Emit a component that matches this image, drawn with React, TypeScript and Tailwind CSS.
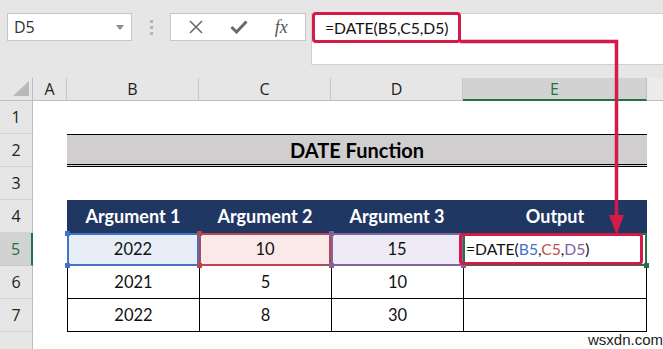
import React from "react";

const RED = "#d41a46";

function RowHead({ n, active }: { n: number | string; active?: boolean }) {
  return active ? (
    <div className="flex items-center justify-center bg-[#d2d2d2] border-r-2 border-r-[#217346] border-b border-b-[#c8c8c8] text-[#217346] text-[16px] font-['Open_Sans',sans-serif]">
      {n}
    </div>
  ) : (
    <div className="flex items-center justify-center bg-[#e6e6e6] border-r border-r-[#bdbdbd] border-b border-b-[#d4d4d4] text-[#222] text-[16px] font-['Open_Sans',sans-serif]">
      {n}
    </div>
  );
}

function ColHead({ l, active }: { l: string; active?: boolean }) {
  return active ? (
    <div className="flex items-center justify-center bg-[#d2d2d2] border-b-2 border-b-[#217346] border-r border-r-[#bdbdbd] text-[#217346] text-[16px] font-['Open_Sans',sans-serif]">
      {l}
    </div>
  ) : (
    <div className="flex items-center justify-center bg-[#e6e6e6] border-b border-b-[#bdbdbd] border-r border-r-[#c8c8c8] text-[#222] text-[16px] font-['Open_Sans',sans-serif]">
      {l}
    </div>
  );
}

function Cell({ children, cls }: { children?: React.ReactNode; cls: string }) {
  return <div className={"flex items-center justify-center text-[16.5px] text-[#111] " + cls}>{children}</div>;
}

export default function App() {
  return (
    <div className="relative w-[663px] h-[349px] overflow-hidden bg-white font-['Lato',sans-serif]">
      {/* toolbar */}
      <div className="h-[78px] bg-[#e6e6e6] flex items-start pt-[13px] pl-[7px]">
        <div className="w-[125px] h-[28px] bg-white border border-[#c6c6c6] flex items-center justify-between pl-[6px] pr-[7px]">
          <span className="text-[16px] text-[#333] font-['Open_Sans',sans-serif]">D5</span>
          <svg width="8" height="5" viewBox="0 0 8 5">
            <path d="M0 0 H8 L4 5 Z" fill="#8a8a8a" />
          </svg>
        </div>
        <div className="w-[38px] h-[28px] flex flex-col items-center justify-center gap-[3px]">
          <div className="w-[3px] h-[3px] bg-[#b3b3b3]" />
          <div className="w-[3px] h-[3px] bg-[#b3b3b3]" />
          <div className="w-[3px] h-[3px] bg-[#b3b3b3]" />
        </div>
        <div className="w-[136px] h-[28px] bg-white border border-[#c6c6c6] flex items-center justify-around px-[4px]">
          <svg width="16" height="16" viewBox="0 0 16 16">
            <path d="M2 2 L14 14 M14 2 L2 14" stroke="#6a6a6a" strokeWidth="1.6" />
          </svg>
          <svg width="18" height="14" viewBox="0 0 18 14">
            <path d="M1.5 7 L6.5 12 L16.5 1.5" stroke="#6a6a6a" strokeWidth="3" fill="none" />
          </svg>
          <span className="text-[18px] italic text-[#555] font-['Liberation_Serif',serif]">fx</span>
        </div>
        <div className="w-[5px]" />
        <div className="flex-1 h-[52px] bg-white border border-[#d0d0d0] border-r-0 pl-[13px] pt-[3px] text-[15.7px] text-[#111]">
          =DATE(B5,C5,D5)
        </div>
      </div>

      {/* sheet */}
      <div className="grid grid-cols-[33px_34px_132px_132px_132px_184px_16px] grid-rows-[23px_repeat(7,33px)_17px]">
        {/* header row */}
        <div className="bg-[#e6e6e6] border-r border-r-[#bdbdbd] border-b border-b-[#bdbdbd] flex items-end justify-end pr-[3px] pb-[4px]">
          <svg width="16" height="15" viewBox="0 0 16 15">
            <path d="M16 0 V15 H0 Z" fill="#b9b9b9" />
          </svg>
        </div>
        <ColHead l="A" />
        <ColHead l="B" />
        <ColHead l="C" />
        <ColHead l="D" />
        <ColHead l="E" active />
        <div className="bg-[#ececec] border-b border-b-[#bdbdbd]" />

        {/* row 1 */}
        <RowHead n={1} />
        <div className="col-span-6" />

        {/* row 2 */}
        <RowHead n={2} />
        <div />
        <div className="col-span-4 bg-[#d0cece] border-t border-t-black border-b-[3px] border-double border-b-black flex items-center justify-center font-bold text-[20px] text-black">
          DATE Function
        </div>
        <div />

        {/* row 3 */}
        <RowHead n={3} />
        <div className="col-span-6" />

        {/* row 4 */}
        <RowHead n={4} />
        <div />
        <Cell cls="bg-[#203764] font-bold text-[18px]">
          <span className="text-white">Argument 1</span>
        </Cell>
        <Cell cls="bg-[#203764] font-bold text-[18px]">
          <span className="text-white">Argument 2</span>
        </Cell>
        <Cell cls="bg-[#203764] font-bold text-[18px]">
          <span className="text-white">Argument 3</span>
        </Cell>
        <Cell cls="bg-[#203764] font-bold text-[18px]">
          <span className="text-white">Output</span>
        </Cell>
        <div />

        {/* row 5 */}
        <RowHead n={5} active />
        <div />
        <Cell cls="bg-[#e8eef8] border-2 border-[#4472c4]">2022</Cell>
        <Cell cls="bg-[#fbe9e9] border-2 border-[#b9474f]">10</Cell>
        <Cell cls="bg-[#efebf6] border-2 border-[#8064a2]">15</Cell>
        <div className="border-2 border-[#217346] flex items-center pl-[1px] text-[15.7px] text-[#111]">
          <span>
            =DATE(<span className="text-[#4472c4]">B5</span>,<span className="text-[#c0504d]">C5</span>,
            <span className="text-[#8064a2]">D5</span>)
          </span>
        </div>
        <div />

        {/* row 6 */}
        <RowHead n={6} />
        <div />
        <Cell cls="border-l border-b border-black">2021</Cell>
        <Cell cls="border-l border-b border-black">5</Cell>
        <Cell cls="border-l border-b border-black">10</Cell>
        <Cell cls="border-l border-r border-b border-black" />
        <div />

        {/* row 7 */}
        <RowHead n={7} />
        <div />
        <Cell cls="border-l border-b border-black">2022</Cell>
        <Cell cls="border-l border-b border-black">8</Cell>
        <Cell cls="border-l border-b border-black">30</Cell>
        <Cell cls="border-l border-r border-b border-black" />
        <div />

        {/* row 8 partial */}
        <div className="bg-[#e6e6e6] border-r border-r-[#bdbdbd]" />
        <div className="col-span-6" />
      </div>

      {/* selection handles */}
      <div className="absolute left-[65px] top-[231px] w-[5px] h-[5px] bg-[#4472c4]" />
      <div className="absolute left-[65px] top-[263px] w-[5px] h-[5px] bg-[#4472c4]" />
      <div className="absolute left-[197px] top-[231px] w-[5px] h-[5px] bg-[#b9474f]" />
      <div className="absolute left-[197px] top-[263px] w-[5px] h-[5px] bg-[#b9474f]" />
      <div className="absolute left-[329px] top-[231px] w-[5px] h-[5px] bg-[#8064a2]" />
      <div className="absolute left-[329px] top-[263px] w-[5px] h-[5px] bg-[#8064a2]" />
      <div className="absolute left-[461px] top-[263px] w-[5px] h-[5px] bg-[#8064a2]" />
      <div className="absolute left-[644px] top-[263px] w-[5px] h-[5px] bg-[#217346]" />

      {/* red highlight boxes */}
      <div className="absolute left-[312px] top-[12px] w-[149px] h-[31px] border-[3px] border-[#d41a46] rounded-[4px]" />
      <div className="absolute left-[459px] top-[233px] w-[184px] h-[32px] border-[3px] border-[#d41a46] rounded-[4px]" />

      {/* arrow */}
      <svg className="absolute left-0 top-0 pointer-events-none" width="663" height="349" viewBox="0 0 663 349">
        <path d="M460 41.5 H616.5 V218" stroke={RED} strokeWidth="3.5" fill="none" />
        <path d="M609 215 H624 L616.5 235 Z" fill={RED} />
      </svg>

      {/* watermark */}
      <div className="absolute left-[588px] top-[331px] text-[15px] text-[#222] font-['Liberation_Sans',sans-serif] leading-[18px]">
        wsxdn.com
      </div>
    </div>
  );
}
